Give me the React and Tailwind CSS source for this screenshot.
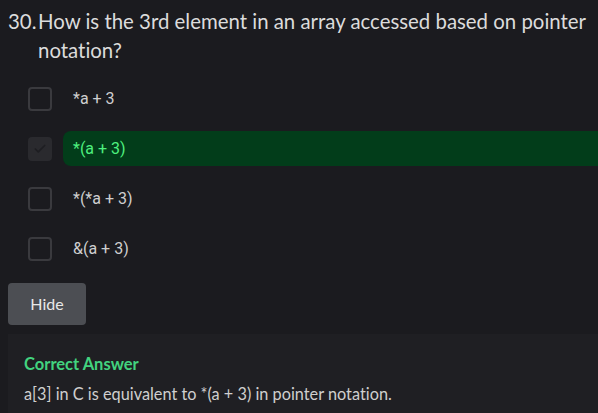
import { Check } from 'lucide-react';

const options = [
  { label: '*a + 3', correct: false },
  { label: '*(a + 3)', correct: true },
  { label: '*(*a + 3)', correct: false },
  { label: '&(a + 3)', correct: false },
];

export default function App() {
  return (
    <div className="min-h-[413px] w-[598px] overflow-hidden bg-[#1b1b1f] pt-[7px] font-['Lato',sans-serif] [font-variant-ligatures:none]">
      <div className="flex pl-[8px] text-[20.4px] leading-[29px] text-[#dcdcdc]">
        <span className="w-[30px] shrink-0">30.</span>
        <h2 className="font-normal">How is the 3rd element in an array accessed based on pointer notation?</h2>
      </div>

      <div className="mt-[16px] flex flex-col gap-[15px] pl-[28px]">
        {options.map((o) => (
          <div key={o.label} className="flex h-[35px] items-center gap-[11px]">
            {o.correct ? (
              <span className="flex h-[24px] w-[24px] shrink-0 items-center justify-center rounded-[4px] bg-[#2a2a2e]">
                <Check className="h-[14px] w-[14px] text-[#1e1e22]" strokeWidth={3} />
              </span>
            ) : (
              <span className="h-[24px] w-[24px] shrink-0 rounded-[4px] border-2 border-[#3a3a3e]" />
            )}
            <div
              className={
                o.correct
                  ? "flex h-[35px] flex-1 items-center rounded-l-[8px] bg-[#023d1a] pl-[10px] font-['Roboto',sans-serif] text-[16px] text-[#4ef07f]"
                  : "flex h-[35px] flex-1 items-center pl-[10px] font-['Roboto',sans-serif] text-[16px] text-[#cfcfcf]"
              }
            >
              {o.label}
            </div>
          </div>
        ))}
      </div>

      <div className="pl-[8px] pt-[17px]">
        <button className="h-[42px] w-[78px] rounded-[4px] bg-[#4c4e53] text-[16px] text-[#e8e8e8]">Hide</button>
      </div>

      <div className="ml-[8px] mt-[9px] bg-[#1f1f23] pl-[16px] pt-[18px] pb-[12px]">
        <div className="text-[16.5px] font-bold text-[#42d37f]">Correct Answer</div>
        <p className="mt-[5px] text-[16.3px] text-[#cfcfcf]">a[3] in C is equivalent to *(a + 3) in pointer notation.</p>
      </div>
    </div>
  );
}
